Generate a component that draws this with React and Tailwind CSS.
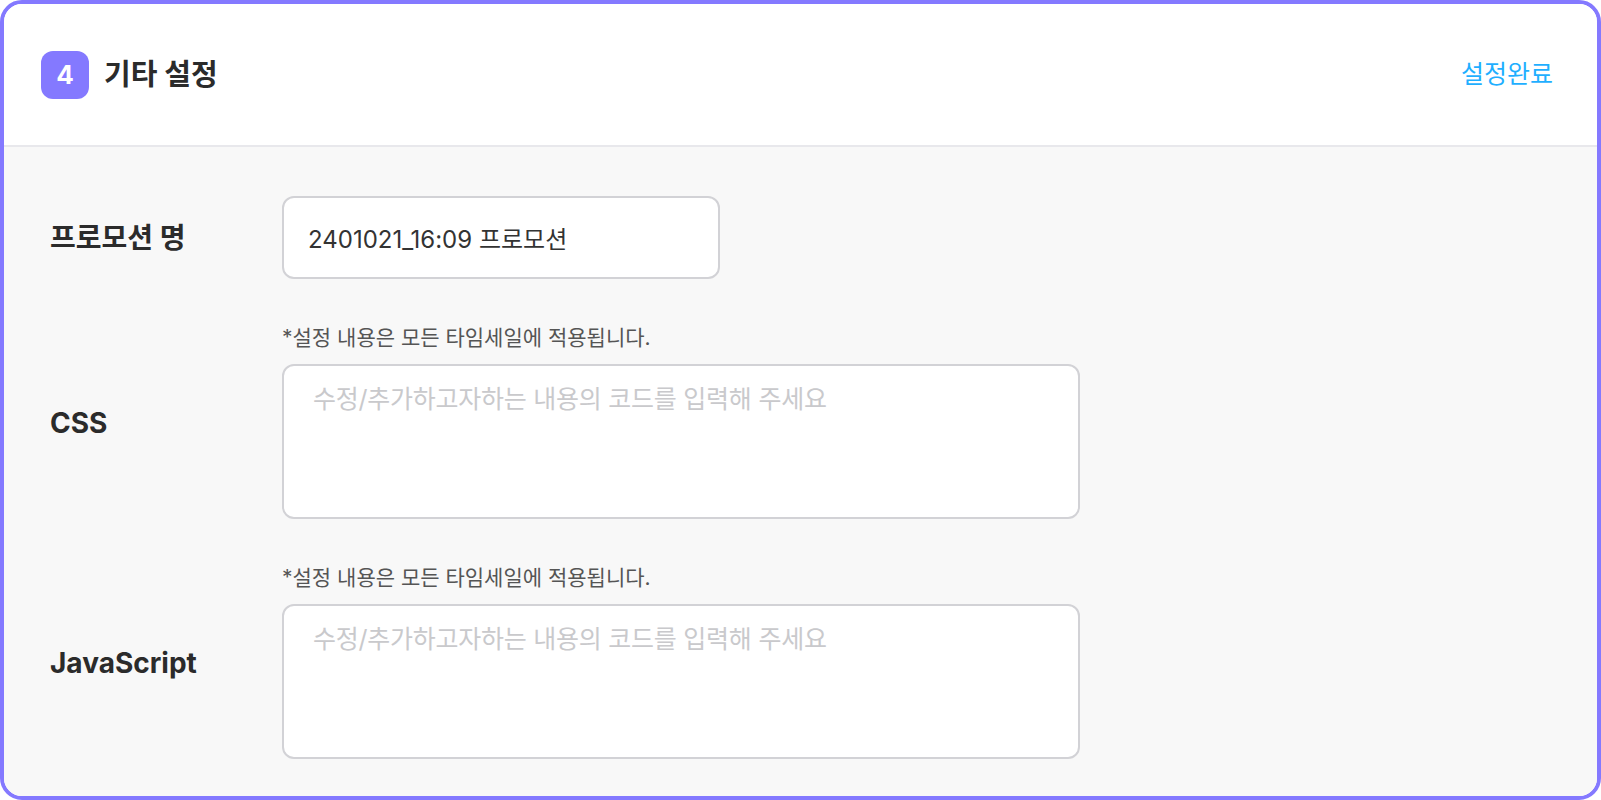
import React from 'react'

const font = { fontFamily: 'Inter, "Noto Sans CJK KR", sans-serif' }

const Note = () => (
    <p className="text-[21px] leading-[24px] text-[#555]">*설정 내용은 모든 타임세일에 적용됩니다.</p>
)

const CodeField = ({ label }) => {
    return (
        <div className="flex items-center mt-[47px]">
            <div className="w-[232px] text-[28px] font-bold text-[#2b2b2b]">{label}</div>
            <div className="flex flex-col">
                <Note />
                <textarea
                    className="mt-[14px] w-[798px] h-[155px] rounded-[12px] border-2 border-[#d2d2d6] bg-white px-[29px] pt-[18px] text-[25px] leading-[30px] text-[#333] placeholder:text-[#c9c9cc] resize-none outline-none tracking-[-0.01em]"
                    placeholder="수정/추가하고자하는 내용의 코드를 입력해 주세요"
                />
            </div>
        </div>
    )
}

const App = () => {
    return (
        <div className="w-[1601px] h-[800px] bg-white" style={font}>
            <div className="h-full flex flex-col border-4 border-[#8479ff] rounded-[22px] overflow-hidden">
                <header className="h-[143px] shrink-0 bg-white border-b-2 border-[#e8e8ec] flex items-center justify-between pl-[37px] pr-[44px]">
                    <div className="flex items-center gap-[15px]">
                        <div className="w-[48px] h-[48px] rounded-[12px] bg-[#8479ff] flex items-center justify-center text-white text-[26px] font-bold">4</div>
                        <h2 className="text-[29px] font-bold text-[#2b2b2b]">기타 설정</h2>
                    </div>
                    <button className="text-[25px] text-[#1fafff]">설정완료</button>
                </header>

                <main className="flex-1 bg-[#f8f8f8] pl-[46px] pt-[49px]">
                    <div className="flex items-center">
                        <div className="w-[232px] text-[28px] font-bold text-[#2b2b2b]">프로모션 명</div>
                        <input
                            className="w-[438px] h-[83px] rounded-[12px] border-2 border-[#d2d2d6] bg-white px-[24px] text-[24px] text-[#333] outline-none"
                            defaultValue="2401021_16:09 프로모션"
                        />
                    </div>
                    <CodeField label="CSS" />
                    <CodeField label="JavaScript" />
                </main>
            </div>
        </div>
    )
}

export default App
